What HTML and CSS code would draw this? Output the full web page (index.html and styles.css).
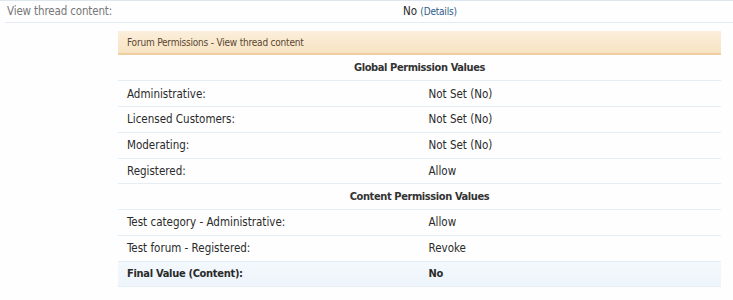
FILE: index.html
```html
<!DOCTYPE html>
<html lang="en">
<head>
    <meta charset="UTF-8">
    <title>Permission details</title>
    <link rel="stylesheet" href="styles.css">
</head>
<body>
    <div class="perm-row">
        <div class="perm-label">View thread content:</div>
        <div class="perm-value">No <a href="#" class="details-link">(Details)</a></div>
    </div>

    <div class="details-box">
        <h3 class="box-header">Forum Permissions - View thread content</h3>
        <table class="perm-table">
            <tr class="section-head">
                <th colspan="2">Global Permission Values</th>
            </tr>
            <tr>
                <td>Administrative:</td>
                <td>Not Set (No)</td>
            </tr>
            <tr>
                <td>Licensed Customers:</td>
                <td>Not Set (No)</td>
            </tr>
            <tr>
                <td>Moderating:</td>
                <td>Not Set (No)</td>
            </tr>
            <tr>
                <td>Registered:</td>
                <td>Allow</td>
            </tr>
            <tr class="section-head">
                <th colspan="2">Content Permission Values</th>
            </tr>
            <tr>
                <td>Test category - Administrative:</td>
                <td>Allow</td>
            </tr>
            <tr>
                <td>Test forum - Registered:</td>
                <td>Revoke</td>
            </tr>
            <tr class="final-row">
                <td>Final Value (Content):</td>
                <td>No</td>
            </tr>
        </table>
    </div>
</body>
</html>
```

FILE: styles.css
```css
* {
    margin: 0;
    padding: 0;
    box-sizing: border-box;
}

body {
    font-family: 'DejaVu Sans Condensed', 'DejaVu Sans', Tahoma, sans-serif;
    font-stretch: condensed;
    font-size: 11.5px;
    color: #2a2a2a;
    background-color: #fefefe;
}

.perm-row {
    display: grid;
    grid-template-columns: 403px 1fr;
    align-items: center;
    height: 23px;
    margin-left: 5px;
    border-bottom: 1px solid #e4ebf2;
    position: relative;
}

.perm-row::before {
    content: '';
    position: absolute;
    top: 0;
    left: -5px;
    right: 0;
    border-top: 1px solid #dbe7f1;
}

.perm-label {
    padding-left: 2px;
    color: #777;
    letter-spacing: -0.15px;
}

.perm-value {
    margin-left: -5px;
}

.details-link {
    color: #2e5c8a;
    font-size: 10px;
    letter-spacing: -0.2px;
    text-decoration: none;
}

.details-box {
    margin: 8px 12px 0 118px;
}

.box-header {
    height: 24px;
    padding: 0 9px;
    line-height: 23px;
    font-size: 10px;
    font-weight: normal;
    letter-spacing: -0.2px;
    color: #5a4630;
    background: linear-gradient(to bottom, #fbeedb, #f7e3c3);
    border-bottom: 2px solid #efcf9f;
}

.perm-table {
    width: 100%;
    border-collapse: collapse;
    table-layout: fixed;
}

.perm-table th,
.perm-table td {
    height: 25.75px;
    padding: 0 9px;
    border-bottom: 1px solid #e6eef5;
    text-align: left;
    font-weight: normal;
}

.perm-table .section-head th {
    text-align: center;
    font-size: 11px;
    font-weight: bold;
    letter-spacing: -0.4px;
    color: #333;
}

.final-row td {
    font-size: 11px;
    font-weight: bold;
    letter-spacing: -0.3px;
    background: linear-gradient(to bottom, #f3f8fc, #edf4fa);
    border-top: 1px solid #e2ecf5;
}
```
